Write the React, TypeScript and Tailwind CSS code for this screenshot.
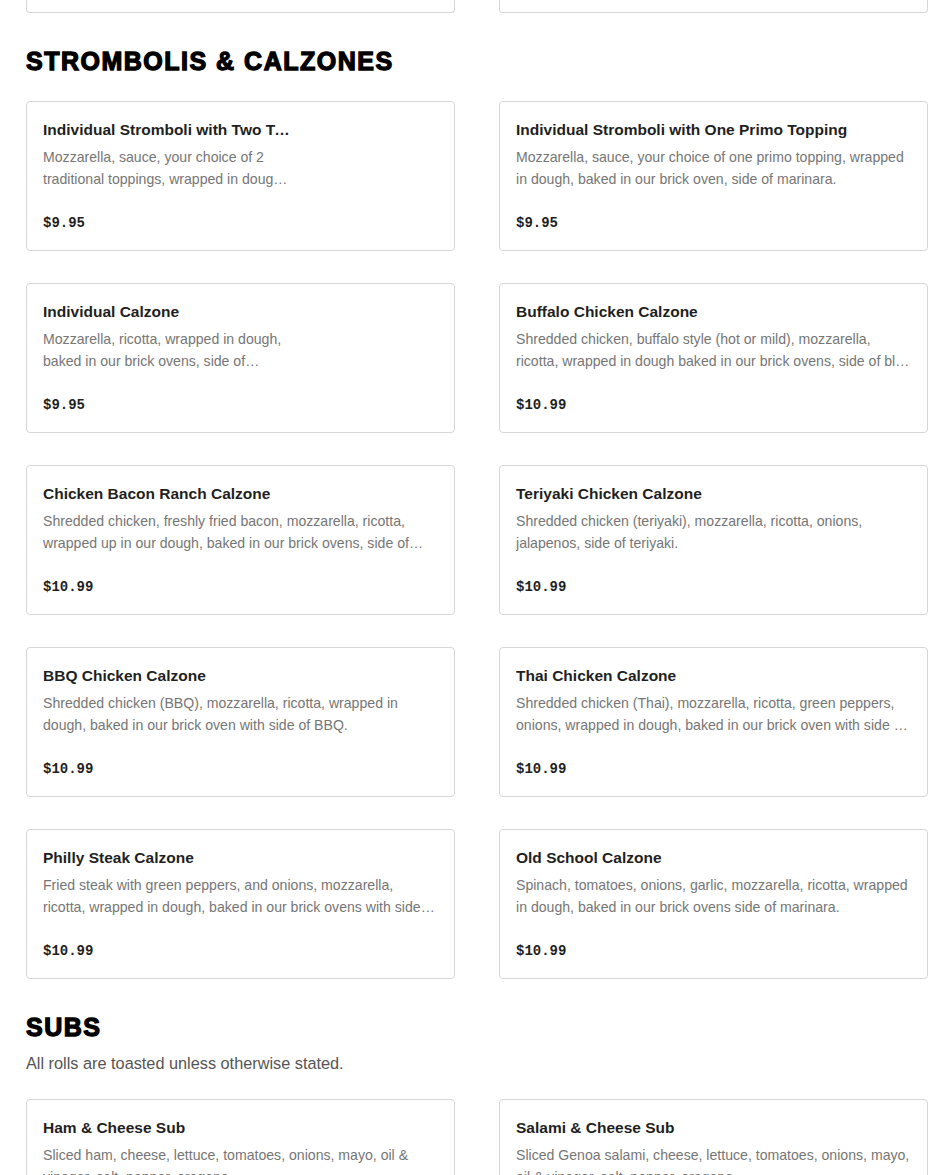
import React from "react";

type Item = { name: string; desc: string; price: string; photo?: boolean };

const strombolis: Item[] = [
  {
    name: "Individual Stromboli with Two Traditional Toppings",
    desc: "Mozzarella, sauce, your choice of 2 traditional toppings, wrapped in dough, baked in our brick oven, side of marinara.",
    price: "$9.95",
    photo: true,
  },
  {
    name: "Individual Stromboli with One Primo Topping",
    desc: "Mozzarella, sauce, your choice of one primo topping, wrapped in dough, baked in our brick oven, side of marinara.",
    price: "$9.95",
  },
  {
    name: "Individual Calzone",
    desc: "Mozzarella, ricotta, wrapped in dough, baked in our brick ovens, side of marinara.",
    price: "$9.95",
    photo: true,
  },
  {
    name: "Buffalo Chicken Calzone",
    desc: "Shredded chicken, buffalo style (hot or mild), mozzarella, ricotta, wrapped in dough baked in our brick ovens, side of blue cheese.",
    price: "$10.99",
  },
  {
    name: "Chicken Bacon Ranch Calzone",
    desc: "Shredded chicken, freshly fried bacon, mozzarella, ricotta, wrapped up in our dough, baked in our brick ovens, side of ranch.",
    price: "$10.99",
  },
  {
    name: "Teriyaki Chicken Calzone",
    desc: "Shredded chicken (teriyaki), mozzarella, ricotta, onions, jalapenos, side of teriyaki.",
    price: "$10.99",
  },
  {
    name: "BBQ Chicken Calzone",
    desc: "Shredded chicken (BBQ), mozzarella, ricotta, wrapped in dough, baked in our brick oven with side of BBQ.",
    price: "$10.99",
  },
  {
    name: "Thai Chicken Calzone",
    desc: "Shredded chicken (Thai), mozzarella, ricotta, green peppers, onions, wrapped in dough, baked in our brick oven with side of Thai sauce.",
    price: "$10.99",
  },
  {
    name: "Philly Steak Calzone",
    desc: "Fried steak with green peppers, and onions, mozzarella, ricotta, wrapped in dough, baked in our brick ovens with side of marinara.",
    price: "$10.99",
  },
  {
    name: "Old School Calzone",
    desc: "Spinach, tomatoes, onions, garlic, mozzarella, ricotta, wrapped in dough, baked in our brick ovens side of marinara.",
    price: "$10.99",
  },
];

const subs: Item[] = [
  {
    name: "Ham & Cheese Sub",
    desc: "Sliced ham, cheese, lettuce, tomatoes, onions, mayo, oil & vinegar, salt, pepper, oregano.",
    price: "$9.99",
  },
  {
    name: "Salami & Cheese Sub",
    desc: "Sliced Genoa salami, cheese, lettuce, tomatoes, onions, mayo, oil & vinegar, salt, pepper, oregano.",
    price: "$9.99",
  },
];

const MenuCard = ({ item }: { item: Item }) => {
  return (
    <div className="flex gap-4 rounded-[4px] border border-[#d6d6d6] bg-white p-4">
      <div className="min-w-0 flex-1">
        <h3 className="truncate text-[15.5px] leading-6 font-bold text-[#1f1f1f]">{item.name}</h3>
        <p className="mt-1 line-clamp-2 h-[44px] text-[14.1px] leading-[22px] text-[#767676]">{item.desc}</p>
        <p className="mt-[22px] font-['Liberation_Mono',monospace] text-sm leading-[22px] font-bold text-[#1f1f1f]">
          {item.price}
        </p>
      </div>
      {item.photo && <div className="w-[132px] shrink-0" />}
    </div>
  );
};

const Section = ({ title, note, items }: { title: string; note?: string; items: Item[] }) => {
  return (
    <section className="mt-8">
      <h2
        className={`text-[25px] leading-8 font-bold tracking-[1.5px] text-black [-webkit-text-stroke:1.3px_black] ${
          note ? "mb-2" : "mb-6"
        }`}
      >
        {title}
      </h2>
      {note && <p className="mb-6 text-[16.3px] leading-6 text-[#555]">{note}</p>}
      <div className="grid grid-cols-2 gap-x-[44px] gap-y-8">
        {items.map((item, index) => (
          <MenuCard key={index} item={item} />
        ))}
      </div>
    </section>
  );
};

export default function App() {
  return (
    <div className="min-h-screen bg-white font-['Liberation_Sans',Arial,sans-serif]">
      <div className="ml-[26px] w-[902px] pb-10">
        <div className="grid grid-cols-2 gap-x-[44px]">
          <div className="h-[13px] rounded-b-[4px] border border-t-0 border-[#d6d6d6]" />
          <div className="h-[13px] rounded-b-[4px] border border-t-0 border-[#d6d6d6]" />
        </div>
        <Section title="STROMBOLIS & CALZONES" items={strombolis} />
        <Section title="SUBS" note="All rolls are toasted unless otherwise stated." items={subs} />
      </div>
    </div>
  );
}
